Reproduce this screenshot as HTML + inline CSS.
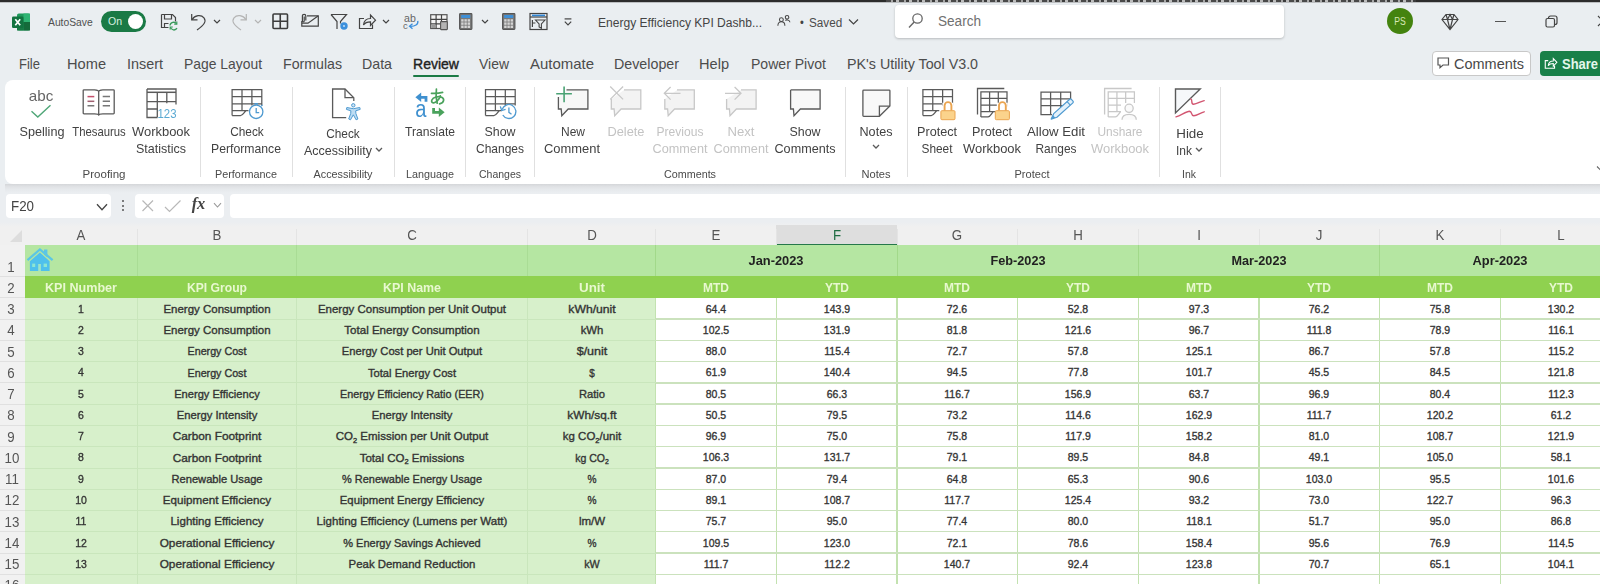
<!DOCTYPE html>
<html><head><meta charset="utf-8"><title>Excel</title>
<style>
html,body{margin:0;padding:0;background:#eaeef1;}
#w{position:absolute;left:0;top:0;width:1600px;height:584px;overflow:hidden;filter:blur(0.5px);}
body{width:1600px;height:584px;overflow:hidden;position:relative;background:#eaeef1;font-family:"Liberation Sans",sans-serif;}
.t{position:absolute;white-space:nowrap;line-height:1;}
.b{position:absolute;box-sizing:border-box;}
svg{overflow:visible;}
sub{font-size:65%;vertical-align:baseline;position:relative;top:0.3em;line-height:0;}
</style></head><body><div id="w">
<div class="b" style="left:0.0px;top:0.0px;width:1600.0px;height:80.0px;background:#eaeef1;"></div>
<div class="b" style="left:0.0px;top:0.0px;width:1600.0px;height:1.8px;background:#2c2c2c;"></div>
<div class="b" style="left:886.0px;top:0.0px;width:530.0px;height:1.8px;background:repeating-linear-gradient(90deg,#4a4a4a 0,#4a4a4a 5px,#a8a8a8 5px,#a8a8a8 7px,#3c3c3c 7px,#3c3c3c 10px,#bdbdbd 10px,#bdbdbd 13px);"></div>
<div class="b" style="left:0.0px;top:1.8px;width:1600.0px;height:1.4px;background:linear-gradient(180deg,#8e8f91,#eaeef1);"></div>
<svg class="b" style="left:12.3px;top:12.5px;" width="18" height="18" viewBox="0 0 18 18"><rect x="5" y="0.500" width="13" height="17" rx="1.800" fill="#1f9a5c"/><rect x="11.500" y="0.500" width="6.500" height="8.500" fill="#2fb473"/><rect x="11.500" y="9" width="6.500" height="8.500" fill="#156a3a"/><rect x="5" y="9" width="6.500" height="8.500" fill="#187a44"/><rect x="0" y="3.500" width="11.500" height="11.500" rx="1.300" fill="#127340"/><path d="M3.300 6.300 L8.200 12.300 M8.200 6.300 L3.300 12.300" stroke="#fff" stroke-width="1.700" fill="none"/></svg>
<span class="t" style="left:48.3px;top:22.2px;font-size:11px;color:#505050;transform-origin:0 50%;transform:translate(0,-50%) scaleX(0.938);">AutoSave</span>
<div class="b" style="left:100.8px;top:11.2px;width:45.5px;height:21.0px;background:#1a7a45;border-radius:11px;"></div>
<span class="t" style="left:108.0px;top:22.3px;font-size:11.5px;color:#d6f0e0;transform-origin:0 50%;transform:translate(0,-50%) scaleX(0.913);">On</span>
<div class="b" style="left:127.8px;top:13.8px;width:15.6px;height:15.6px;background:#fff;border-radius:50%;"></div>
<svg class="b" style="left:160.0px;top:12.0px;" width="18" height="18" viewBox="0 0 18 18"><path d="M1.5 2.5 h11 l3 3 v4 M1.5 2.5 v13 h7" fill="none" stroke="#444" stroke-width="1.2"/><path d="M4.5 2.5 v4.5 h7 v-4.5" fill="none" stroke="#444" stroke-width="1.2"/><path d="M4.5 15.5 v-4 h4" fill="none" stroke="#444" stroke-width="1.2"/><path d="M10 13.5 a3.6 3.6 0 0 1 6.6 -1.6 M17 16.2 a3.6 3.6 0 0 1 -6.6 -1" fill="none" stroke="#3a9b5c" stroke-width="1.3"/><path d="M16.8 9.6 v2.6 h-2.6 M10.2 17.6 v-2.6 h2.6" fill="none" stroke="#3a9b5c" stroke-width="1.2"/></svg>
<svg class="b" style="left:190.0px;top:11.5px;" width="17" height="19" viewBox="0 0 17 19"><path d="M1.700 2 v5.800 h5.800" fill="none" stroke="#444" stroke-width="1.2" stroke-width="1.400"/><path d="M2 7.600 C5 3 11 2.300 14 5.800 C16.500 9.200 14.500 13 7 18" fill="none" stroke="#444" stroke-width="1.2" stroke-width="1.400"/></svg>
<svg class="b" style="left:213.0px;top:19.0px;" width="8" height="6" viewBox="0 0 8 6"><path d="M1 1 L4 4 L7 1" fill="none" stroke="#444" stroke-width="1.2" stroke-width="1.3"/></svg>
<svg class="b" style="left:230.5px;top:11.5px;" width="17" height="19" viewBox="0 0 17 19"><path d="M15.300 2 v5.800 h-5.800" fill="none" stroke="#b4b4b4" stroke-width="1.2" stroke-width="1.300"/><path d="M15 7.600 C12 3 6 2.300 3 5.800 C0.500 9.200 2.500 13 10 18" fill="none" stroke="#b4b4b4" stroke-width="1.2" stroke-width="1.300"/></svg>
<svg class="b" style="left:254.0px;top:19.0px;" width="8" height="6" viewBox="0 0 8 6"><path d="M1 1 L4 4 L7 1" fill="none" stroke="#b4b4b4" stroke-width="1.2"/></svg>
<svg class="b" style="left:271.5px;top:13.0px;" width="16.5" height="16.5" viewBox="0 0 16.5 16.5"><rect x="1" y="1" width="14.500" height="14.500" rx="1" fill="none" stroke="#3c3c3c" stroke-width="1.600"/><path d="M8.250 1 v14.500 M1 8.250 h14.500" fill="none" stroke="#3c3c3c" stroke-width="1.600"/></svg>
<svg class="b" style="left:300.0px;top:12.0px;" width="20" height="16" viewBox="0 0 20 16"><path d="M7 3.800 H18.300 V14.200 H1.800 V9" fill="none" stroke="#444" stroke-width="1.2" stroke-width="1.300"/><path d="M1.800 11.200 H8 L18 4" fill="none" stroke="#444" stroke-width="1.2" stroke-width="1.200"/><path d="M5.800 8.500 V4 a1.700 1.700 0 0 0 -3.400 0 V9 a0.900 0.900 0 0 0 1.800 0 V4.500" fill="none" stroke="#444" stroke-width="1.2" stroke-width="1"/></svg>
<svg class="b" style="left:330.0px;top:13.0px;" width="20" height="18" viewBox="0 0 20 18"><path d="M1 1.5 h15.5 l-6 7 v2 M7 16 v-7.5 l-6 -7" fill="none" stroke="#444" stroke-width="1.2" stroke-width="1.3"/><circle cx="14" cy="13" r="3.700" fill="#3b8fdc"/><circle cx="14" cy="13" r="0.900" fill="#cfe4f7"/></svg>
<svg class="b" style="left:358.0px;top:12.0px;" width="18" height="18" viewBox="0 0 18 18"><path d="M6 6.5 h-4.5 v10 h13 v-4" fill="none" stroke="#444" stroke-width="1.2" stroke-width="1.3"/><path d="M5.5 13 c0.5 -4.5 3 -6.5 7 -6.5 v-3.5 l5 5.2 l-5 5.2 v-3.6 c-3.5 0 -5.5 0.7 -7 3.2 z" fill="none" stroke="#444" stroke-width="1.2"/></svg>
<svg class="b" style="left:382.0px;top:19.0px;" width="8" height="6" viewBox="0 0 8 6"><path d="M1 1 L4 4 L7 1" fill="none" stroke="#444" stroke-width="1.2" stroke-width="1.3"/></svg>
<span class="t" style="left:403.8px;top:17.8px;font-size:11px;color:#666;transform-origin:0 50%;transform:translate(0,-50%) scaleX(0.963);">ab</span>
<svg class="b" style="left:402.0px;top:20.0px;" width="18" height="11" viewBox="0 0 18 11"><text x="3.300" y="8.600" font-size="9.500" fill="#666" text-anchor="middle" font-family="Liberation Sans">c</text><path d="M15.800 0.800 C16.500 4.500 13 6.500 8 6.300" fill="none" stroke="#3b8fdc" stroke-width="1.300"/><path d="M10.500 3.800 L7.500 6.300 L10.500 8.800" fill="none" stroke="#3b8fdc" stroke-width="1.300"/></svg>
<svg class="b" style="left:430.0px;top:13.5px;" width="18" height="16" viewBox="0 0 18 16"><rect x="0.700" y="0.700" width="16.300" height="13.800" fill="#f4f4f4" stroke="#555" stroke-width="1.200"/><path d="M0.700 5.300 h16.300 M0.700 9.900 h10 M6.100 0.700 v13.800 M11.500 0.700 v7" fill="none" stroke="#444" stroke-width="1.2" stroke-width="1"/><rect x="1.300" y="10.500" width="4.300" height="3.500" fill="#9a9a9a"/><rect x="10.600" y="7.600" width="6.700" height="8" rx="0.500" fill="#b4b4b4" stroke="#555" stroke-width="1.100"/></svg>
<svg class="b" style="left:459.3px;top:13.4px;" width="13.5" height="17" viewBox="0 0 13.5 17"><rect x="0.600" y="0.600" width="12.300" height="15.800" rx="0.800" fill="#7a7a7a" stroke="#555" stroke-width="1.100"/><rect x="2.200" y="2" width="9" height="3" fill="#3f8fd6"/><rect x="2.20" y="6.20" width="2.400" height="2.400" fill="#d4d4d4"/><rect x="5.40" y="6.20" width="2.400" height="2.400" fill="#d4d4d4"/><rect x="8.60" y="6.20" width="2.400" height="2.400" fill="#d4d4d4"/><rect x="2.20" y="9.40" width="2.400" height="2.400" fill="#d4d4d4"/><rect x="5.40" y="9.40" width="2.400" height="2.400" fill="#d4d4d4"/><rect x="8.60" y="9.40" width="2.400" height="2.400" fill="#d4d4d4"/><rect x="2.20" y="12.60" width="2.400" height="2.400" fill="#d4d4d4"/><rect x="5.40" y="12.60" width="2.400" height="2.400" fill="#d4d4d4"/><rect x="8.60" y="12.60" width="2.400" height="2.400" fill="#d4d4d4"/></svg>
<svg class="b" style="left:481.0px;top:19.0px;" width="8" height="6" viewBox="0 0 8 6"><path d="M1 1 L4 4 L7 1" fill="none" stroke="#444" stroke-width="1.2" stroke-width="1.3"/></svg>
<svg class="b" style="left:502.0px;top:13.4px;" width="13.5" height="17" viewBox="0 0 13.5 17"><rect x="0.600" y="0.600" width="12.300" height="15.800" rx="0.800" fill="#7a7a7a" stroke="#555" stroke-width="1.100"/><rect x="2.200" y="2" width="9" height="3" fill="#3f8fd6"/><rect x="2.20" y="6.20" width="2.400" height="2.400" fill="#d4d4d4"/><rect x="5.40" y="6.20" width="2.400" height="2.400" fill="#d4d4d4"/><rect x="8.60" y="6.20" width="2.400" height="2.400" fill="#d4d4d4"/><rect x="2.20" y="9.40" width="2.400" height="2.400" fill="#d4d4d4"/><rect x="5.40" y="9.40" width="2.400" height="2.400" fill="#d4d4d4"/><rect x="8.60" y="9.40" width="2.400" height="2.400" fill="#d4d4d4"/><rect x="2.20" y="12.60" width="2.400" height="2.400" fill="#d4d4d4"/><rect x="5.40" y="12.60" width="2.400" height="2.400" fill="#d4d4d4"/><rect x="8.60" y="12.60" width="2.400" height="2.400" fill="#d4d4d4"/></svg>
<svg class="b" style="left:529.0px;top:12.0px;" width="19" height="19" viewBox="0 0 19 19"><rect x="1" y="1.5" width="17" height="16" fill="none" stroke="#444" stroke-width="1.2" stroke-width="1.2"/><path d="M1 5 h17" fill="none" stroke="#444" stroke-width="1.2"/><rect x="3" y="2.6" width="13" height="1.6" fill="#2f86d6"/><path d="M6.5 8 h9.5 l-3.6 4 v4.2 l-2.3 -1.3 v-2.9 z" fill="#eaeef1" stroke="#444" stroke-width="1.1"/><path d="M3.4 8 v7 M3.4 11 h3" fill="none" stroke="#444" stroke-width="1.2" stroke-width="1"/></svg>
<svg class="b" style="left:563.8px;top:18.0px;" width="8" height="8" viewBox="0 0 8 8"><path d="M0.600 0.900 h6.800" fill="none" stroke="#444" stroke-width="1.2" stroke-width="1.300"/><path d="M0.800 3.600 L4 6.800 L7.200 3.600" fill="none" stroke="#444" stroke-width="1.2" stroke-width="1.300"/></svg>
<span class="t" style="left:598.0px;top:22.5px;font-size:12.5px;color:#444;transform-origin:0 50%;transform:translate(0,-50%) scaleX(0.965);">Energy Efficiency KPI Dashb...</span>
<svg class="b" style="left:776.5px;top:14.3px;" width="14" height="13" viewBox="0 0 16 14"><circle cx="5" cy="6" r="2.2" fill="none" stroke="#444" stroke-width="1.2" stroke-width="1.1"/><path d="M1 13 c0 -3.5 2 -4.5 4 -4.5 s4 1 4 4.500" fill="none" stroke="#444" stroke-width="1.2" stroke-width="1.1"/><circle cx="11.5" cy="3.2" r="2" fill="none" stroke="#444" stroke-width="1.2" stroke-width="1.1"/><path d="M9.5 7 c1 -1 4.800 -1.300 5.300 2" fill="none" stroke="#444" stroke-width="1.2" stroke-width="1.100"/></svg>
<span class="t" style="left:800.0px;top:22.6px;font-size:12.5px;color:#444;transform-origin:0 50%;transform:translate(0,-50%) scaleX(0.869);">•</span>
<span class="t" style="left:809.3px;top:22.6px;font-size:12.5px;color:#4a4a4a;transform-origin:0 50%;transform:translate(0,-50%) scaleX(0.936);">Saved</span>
<svg class="b" style="left:848.0px;top:18.0px;" width="11" height="8" viewBox="0 0 11 8"><path d="M1 1.5 L5.5 6 L10 1.500" fill="none" stroke="#444" stroke-width="1.2" stroke-width="1.300"/></svg>
<div class="b" style="left:895.0px;top:5.0px;width:389.0px;height:33.0px;background:#fff;border-radius:4px;box-shadow:0 1px 2.5px rgba(0,0,0,0.22);"></div>
<svg class="b" style="left:908.3px;top:12.3px;" width="16" height="17" viewBox="0 0 16 17"><circle cx="9.5" cy="6.5" r="4.700" fill="none" stroke="#666" stroke-width="1.300"/><path d="M6.200 10 L1 15.500" stroke="#666" stroke-width="1.400" fill="none"/></svg>
<span class="t" style="left:938.0px;top:20.8px;font-size:14px;color:#707070;transform-origin:0 50%;transform:translate(0,-50%) scaleX(0.970);">Search</span>
<div class="b" style="left:1387.0px;top:8.0px;width:26.0px;height:26.0px;background:#44830f;border-radius:50%;"></div>
<span class="t" style="left:1400.0px;top:21.5px;font-size:10px;color:#d8e8b8;transform:translate(-50%,-50%) scaleX(0.862);">PS</span>
<svg class="b" style="left:1441.0px;top:12.5px;" width="18" height="18" viewBox="0 0 18 18"><path d="M5 1.500 h8 l4 5 l-8 10 l-8 -10 z M1 6.500 h16 M5 1.500 l1.500 5 l2.500 10 l2.500 -10 l1.500 -5 M6.500 6.500 l2.500 -5 l2.500 5" fill="none" stroke="#444" stroke-width="1.2" stroke-width="1"/></svg>
<div class="b" style="left:1495.0px;top:20.5px;width:11.0px;height:1.4px;background:#555;"></div>
<svg class="b" style="left:1545.0px;top:15.0px;" width="13" height="13" viewBox="0 0 13 13"><rect x="1" y="3.500" width="8.500" height="8.500" rx="1.500" fill="none" stroke="#444" stroke-width="1.2" stroke-width="1.200"/><path d="M3.500 3.500 v-0.500 a2 2 0 0 1 2 -2 h4.500 a2 2 0 0 1 2 2 v4.500 a2 2 0 0 1 -2 2 h-0.500" fill="none" stroke="#444" stroke-width="1.2" stroke-width="1.200"/></svg>
<svg class="b" style="left:1597.0px;top:15.0px;" width="12" height="12" viewBox="0 0 12 12"><path d="M1 1 L11 11 M11 1 L1 11" fill="none" stroke="#444" stroke-width="1.2" stroke-width="1.200"/></svg>
<span class="t" style="left:19.0px;top:63.2px;font-size:15px;color:#4c4c4c;transform-origin:0 50%;transform:translate(0,-50%) scaleX(0.869);">File</span>
<span class="t" style="left:67.0px;top:63.2px;font-size:15px;color:#4c4c4c;transform-origin:0 50%;transform:translate(0,-50%) scaleX(0.975);">Home</span>
<span class="t" style="left:127.0px;top:63.2px;font-size:15px;color:#4c4c4c;transform-origin:0 50%;transform:translate(0,-50%) scaleX(0.959);">Insert</span>
<span class="t" style="left:184.0px;top:63.2px;font-size:15px;color:#4c4c4c;transform-origin:0 50%;transform:translate(0,-50%) scaleX(0.926);">Page Layout</span>
<span class="t" style="left:283.0px;top:63.2px;font-size:15px;color:#4c4c4c;transform-origin:0 50%;transform:translate(0,-50%) scaleX(0.944);">Formulas</span>
<span class="t" style="left:362.0px;top:63.2px;font-size:15px;color:#4c4c4c;transform-origin:0 50%;transform:translate(0,-50%) scaleX(0.947);">Data</span>
<span class="t" style="left:413.0px;top:63.2px;font-size:15px;color:#222;transform-origin:0 50%;transform:translate(0,-50%) scaleX(0.935);-webkit-text-stroke:0.4px #222;">Review</span>
<div class="b" style="left:413.0px;top:74.5px;width:46.0px;height:2.5px;background:#1b7a46;border-radius:1px;"></div>
<span class="t" style="left:479.0px;top:63.2px;font-size:15px;color:#4c4c4c;transform-origin:0 50%;transform:translate(0,-50%) scaleX(0.931);">View</span>
<span class="t" style="left:530.0px;top:63.2px;font-size:15px;color:#4c4c4c;transform-origin:0 50%;transform:translate(0,-50%) scaleX(0.997);">Automate</span>
<span class="t" style="left:614.0px;top:63.2px;font-size:15px;color:#4c4c4c;transform-origin:0 50%;transform:translate(0,-50%) scaleX(0.951);">Developer</span>
<span class="t" style="left:699.0px;top:63.2px;font-size:15px;color:#4c4c4c;transform-origin:0 50%;transform:translate(0,-50%) scaleX(0.973);">Help</span>
<span class="t" style="left:751.0px;top:63.2px;font-size:15px;color:#4c4c4c;transform-origin:0 50%;transform:translate(0,-50%) scaleX(0.937);">Power Pivot</span>
<span class="t" style="left:847.0px;top:63.2px;font-size:15px;color:#4c4c4c;transform-origin:0 50%;transform:translate(0,-50%) scaleX(0.952);">PK's Utility Tool V3.0</span>
<div class="b" style="left:1432.0px;top:51.0px;width:98.5px;height:24.5px;background:#fff;border:1px solid #c8c8c8;border-radius:4px;"></div>
<svg class="b" style="left:1436.5px;top:57.0px;" width="13" height="12" viewBox="0 0 13 12"><path d="M1 1 h10.500 v7 h-5.500 l-3 2.600 v-2.600 h-2 z" fill="none" stroke="#555" stroke-width="1.200"/></svg>
<span class="t" style="left:1454.0px;top:63.5px;font-size:14.5px;color:#484848;transform-origin:0 50%;transform:translate(0,-50%) scaleX(0.999);">Comments</span>
<div class="b" style="left:1539.5px;top:51.0px;width:70.0px;height:24.5px;background:#198049;border-radius:4px;"></div>
<svg class="b" style="left:1544.0px;top:56.0px;" width="13.5" height="13.5" viewBox="0 0 16 16"><path d="M5 5.500 h-3.500 v9 h11 v-3" fill="none" stroke="#fff" stroke-width="1.300"/><path d="M5 11.500 c0.500 -4 2.500 -5.500 6 -5.500 v-3 l4.300 4.500 l-4.300 4.500 v-3 c-3 0 -4.700 0.500 -6 2.500 z" fill="none" stroke="#fff" stroke-width="1.200"/></svg>
<span class="t" style="left:1562.0px;top:63.5px;font-size:14.5px;color:#e4f8ec;font-weight:bold;transform-origin:0 50%;transform:translate(0,-50%) scaleX(0.893);">Share</span>
<div class="b" style="left:0.0px;top:183.5px;width:1600.0px;height:41.0px;background:#ebeef1;"></div>
<div class="b" style="left:5.0px;top:183.6px;width:1600.0px;height:9.5px;background:linear-gradient(180deg,#d4d6d9 0,#e0e2e5 30%,#e7eaed 65%,#ebeef1 100%);"></div>
<div class="b" style="left:6.0px;top:194.0px;width:105.0px;height:23.5px;background:#ffffff;border-radius:4px;"></div>
<span class="t" style="left:11.0px;top:205.5px;font-size:14px;color:#444;transform-origin:0 50%;transform:translate(0,-50%) scaleX(0.954);">F20</span>
<svg class="b" style="left:95.5px;top:203.0px;" width="12" height="9" viewBox="0 0 12 9"><path d="M1 1.300 L6 6.800 L11 1.300" fill="none" stroke="#444" stroke-width="1.3"/></svg>
<div class="b" style="left:122.0px;top:200.0px;width:2.4px;height:2.4px;background:#555;border-radius:50%;"></div>
<div class="b" style="left:122.0px;top:204.5px;width:2.4px;height:2.4px;background:#555;border-radius:50%;"></div>
<div class="b" style="left:122.0px;top:209.0px;width:2.4px;height:2.4px;background:#555;border-radius:50%;"></div>
<div class="b" style="left:135.0px;top:194.0px;width:89.0px;height:23.5px;background:#ffffff;border-radius:4px;"></div>
<svg class="b" style="left:141.0px;top:199.0px;" width="14" height="14" viewBox="0 0 14 14"><path d="M1.5 1.5 L12 12 M12 1.5 L1.5 12" fill="none" stroke="#b8b8b8" stroke-width="1.2"/></svg>
<svg class="b" style="left:164.0px;top:199.0px;" width="18" height="14" viewBox="0 0 18 14"><path d="M1 8 L5.5 12.5 L16.5 1.5" fill="none" stroke="#b8b8b8" stroke-width="1.2"/></svg>
<span class="t" style="left:198.500px;top:204px;font-family:'Liberation Serif',serif;font-style:italic;font-weight:bold;font-size:16.500px;color:#444;transform:translate(-50%,-50%);">fx</span>
<svg class="b" style="left:213.0px;top:202.0px;" width="9" height="7" viewBox="0 0 9 7"><path d="M1 1.2 L4.5 5 L8 1.2" fill="none" stroke="#999" stroke-width="1.1"/></svg>
<div class="b" style="left:230.0px;top:194.0px;width:1380.0px;height:23.5px;background:#ffffff;border-radius:4px;"></div>
<div class="b" style="left:0.0px;top:221.5px;width:1600.0px;height:23.1px;background:linear-gradient(180deg,#ebeef1 0,#f0f0f0 5px);"></div>
<div class="b" style="left:776.2px;top:225.0px;width:120.8px;height:19.6px;background:#dedede;border-bottom:1.500px solid #26784a;"></div>
<span class="t" style="left:81.0px;top:235.2px;font-size:14px;color:#555;transform:translate(-50%,-50%) scaleX(0.950);">A</span>
<div class="b" style="left:136.5px;top:228.5px;width:1.0px;height:16.1px;background:#e4e4e4;"></div>
<span class="t" style="left:216.5px;top:235.2px;font-size:14px;color:#555;transform:translate(-50%,-50%) scaleX(0.950);">B</span>
<div class="b" style="left:295.5px;top:228.5px;width:1.0px;height:16.1px;background:#e4e4e4;"></div>
<span class="t" style="left:411.8px;top:235.2px;font-size:14px;color:#555;transform:translate(-50%,-50%) scaleX(0.950);">C</span>
<div class="b" style="left:527.0px;top:228.5px;width:1.0px;height:16.1px;background:#e4e4e4;"></div>
<span class="t" style="left:591.5px;top:235.2px;font-size:14px;color:#555;transform:translate(-50%,-50%) scaleX(0.950);">D</span>
<div class="b" style="left:655.0px;top:228.5px;width:1.0px;height:16.1px;background:#e4e4e4;"></div>
<span class="t" style="left:715.9px;top:235.2px;font-size:14px;color:#555;transform:translate(-50%,-50%) scaleX(0.950);">E</span>
<div class="b" style="left:775.7px;top:228.5px;width:1.0px;height:16.1px;background:#e4e4e4;"></div>
<span class="t" style="left:836.6px;top:235.2px;font-size:14px;color:#1e6b41;transform:translate(-50%,-50%) scaleX(0.950);">F</span>
<div class="b" style="left:896.5px;top:228.5px;width:1.0px;height:16.1px;background:#e4e4e4;"></div>
<span class="t" style="left:957.3px;top:235.2px;font-size:14px;color:#555;transform:translate(-50%,-50%) scaleX(0.950);">G</span>
<div class="b" style="left:1017.1px;top:228.5px;width:1.0px;height:16.1px;background:#e4e4e4;"></div>
<span class="t" style="left:1078.0px;top:235.2px;font-size:14px;color:#555;transform:translate(-50%,-50%) scaleX(0.950);">H</span>
<div class="b" style="left:1137.8px;top:228.5px;width:1.0px;height:16.1px;background:#e4e4e4;"></div>
<span class="t" style="left:1198.7px;top:235.2px;font-size:14px;color:#555;transform:translate(-50%,-50%) scaleX(0.950);">I</span>
<div class="b" style="left:1258.5px;top:228.5px;width:1.0px;height:16.1px;background:#e4e4e4;"></div>
<span class="t" style="left:1319.3px;top:235.2px;font-size:14px;color:#555;transform:translate(-50%,-50%) scaleX(0.950);">J</span>
<div class="b" style="left:1379.2px;top:228.5px;width:1.0px;height:16.1px;background:#e4e4e4;"></div>
<span class="t" style="left:1440.1px;top:235.2px;font-size:14px;color:#555;transform:translate(-50%,-50%) scaleX(0.950);">K</span>
<div class="b" style="left:1499.9px;top:228.5px;width:1.0px;height:16.1px;background:#e4e4e4;"></div>
<span class="t" style="left:1560.7px;top:235.2px;font-size:14px;color:#555;transform:translate(-50%,-50%) scaleX(0.950);">L</span>
<div class="b" style="left:1620.5px;top:228.5px;width:1.0px;height:16.1px;background:#e4e4e4;"></div>
<svg class="b" style="left:8.0px;top:228.0px;" width="16" height="15" viewBox="0 0 16 15"><path d="M14 2 L14 14 L2 14 Z" fill="#dddddd"/></svg>
<div class="b" style="left:0.0px;top:244.6px;width:25.0px;height:339.4px;background:#f1f1f1;"></div>
<span class="t" style="left:11.0px;top:266.5px;font-size:14px;color:#555;transform:translate(-50%,-50%) scaleX(0.950);">1</span>
<div class="b" style="left:0.0px;top:275.6px;width:25.0px;height:1.0px;background:#e0e0e0;"></div>
<span class="t" style="left:11.0px;top:287.5px;font-size:14px;color:#555;transform:translate(-50%,-50%) scaleX(0.950);">2</span>
<div class="b" style="left:0.0px;top:297.3px;width:25.0px;height:1.0px;background:#e0e0e0;"></div>
<span class="t" style="left:11.0px;top:308.9px;font-size:14px;color:#555;transform:translate(-50%,-50%) scaleX(0.950);">3</span>
<div class="b" style="left:0.0px;top:318.6px;width:25.0px;height:1.0px;background:#e0e0e0;"></div>
<span class="t" style="left:11.0px;top:330.2px;font-size:14px;color:#555;transform:translate(-50%,-50%) scaleX(0.950);">4</span>
<div class="b" style="left:0.0px;top:339.8px;width:25.0px;height:1.0px;background:#e0e0e0;"></div>
<span class="t" style="left:11.0px;top:351.5px;font-size:14px;color:#555;transform:translate(-50%,-50%) scaleX(0.950);">5</span>
<div class="b" style="left:0.0px;top:361.1px;width:25.0px;height:1.0px;background:#e0e0e0;"></div>
<span class="t" style="left:11.0px;top:372.7px;font-size:14px;color:#555;transform:translate(-50%,-50%) scaleX(0.950);">6</span>
<div class="b" style="left:0.0px;top:382.4px;width:25.0px;height:1.0px;background:#e0e0e0;"></div>
<span class="t" style="left:11.0px;top:394.0px;font-size:14px;color:#555;transform:translate(-50%,-50%) scaleX(0.950);">7</span>
<div class="b" style="left:0.0px;top:403.6px;width:25.0px;height:1.0px;background:#e0e0e0;"></div>
<span class="t" style="left:11.0px;top:415.3px;font-size:14px;color:#555;transform:translate(-50%,-50%) scaleX(0.950);">8</span>
<div class="b" style="left:0.0px;top:424.9px;width:25.0px;height:1.0px;background:#e0e0e0;"></div>
<span class="t" style="left:11.0px;top:436.6px;font-size:14px;color:#555;transform:translate(-50%,-50%) scaleX(0.950);">9</span>
<div class="b" style="left:0.0px;top:446.2px;width:25.0px;height:1.0px;background:#e0e0e0;"></div>
<span class="t" style="left:12.0px;top:457.8px;font-size:14px;color:#555;transform:translate(-50%,-50%) scaleX(0.950);">10</span>
<div class="b" style="left:0.0px;top:467.5px;width:25.0px;height:1.0px;background:#e0e0e0;"></div>
<span class="t" style="left:12.0px;top:479.1px;font-size:14px;color:#555;transform:translate(-50%,-50%) scaleX(0.950);">11</span>
<div class="b" style="left:0.0px;top:488.7px;width:25.0px;height:1.0px;background:#e0e0e0;"></div>
<span class="t" style="left:12.0px;top:500.4px;font-size:14px;color:#555;transform:translate(-50%,-50%) scaleX(0.950);">12</span>
<div class="b" style="left:0.0px;top:510.0px;width:25.0px;height:1.0px;background:#e0e0e0;"></div>
<span class="t" style="left:12.0px;top:521.6px;font-size:14px;color:#555;transform:translate(-50%,-50%) scaleX(0.950);">13</span>
<div class="b" style="left:0.0px;top:531.3px;width:25.0px;height:1.0px;background:#e0e0e0;"></div>
<span class="t" style="left:12.0px;top:542.9px;font-size:14px;color:#555;transform:translate(-50%,-50%) scaleX(0.950);">14</span>
<div class="b" style="left:0.0px;top:552.5px;width:25.0px;height:1.0px;background:#e0e0e0;"></div>
<span class="t" style="left:12.0px;top:564.2px;font-size:14px;color:#555;transform:translate(-50%,-50%) scaleX(0.950);">15</span>
<div class="b" style="left:0.0px;top:573.8px;width:25.0px;height:1.0px;background:#e0e0e0;"></div>
<span class="t" style="left:12.0px;top:585.4px;font-size:14px;color:#555;transform:translate(-50%,-50%) scaleX(0.950);">16</span>
<div class="b" style="left:0.0px;top:595.1px;width:25.0px;height:1.0px;background:#e0e0e0;"></div>
<div class="b" style="left:25.0px;top:244.6px;width:1575.0px;height:31.5px;background:#b5e6a2;"></div>
<div class="b" style="left:136.5px;top:244.6px;width:1.0px;height:31.5px;background:#a9dc95;"></div>
<div class="b" style="left:295.5px;top:244.6px;width:1.0px;height:31.5px;background:#a9dc95;"></div>
<div class="b" style="left:527.0px;top:244.6px;width:1.0px;height:31.5px;background:#a9dc95;"></div>
<div class="b" style="left:655.0px;top:244.6px;width:1.2px;height:31.5px;background:#a2d98a;"></div>
<div class="b" style="left:896.5px;top:244.6px;width:1.2px;height:31.5px;background:#a2d98a;"></div>
<div class="b" style="left:1137.8px;top:244.6px;width:1.2px;height:31.5px;background:#a2d98a;"></div>
<div class="b" style="left:1379.2px;top:244.6px;width:1.2px;height:31.5px;background:#a2d98a;"></div>
<div class="b" style="left:25.0px;top:276.1px;width:1575.0px;height:21.7px;background:#8fd14f;"></div>
<div class="b" style="left:25.0px;top:297.8px;width:630.5px;height:286.2px;background:#d7f0cb;"></div>
<div class="b" style="left:655.5px;top:297.8px;width:944.5px;height:286.2px;background:#ffffff;"></div>
<div class="b" style="left:654.8px;top:297.8px;width:1.4px;height:286.2px;background:#c3e2b0;"></div>
<div class="b" style="left:775.5px;top:297.8px;width:1.4px;height:286.2px;background:#c3e2b0;"></div>
<div class="b" style="left:896.3px;top:297.8px;width:1.4px;height:286.2px;background:#c3e2b0;"></div>
<div class="b" style="left:1016.9px;top:297.8px;width:1.4px;height:286.2px;background:#c3e2b0;"></div>
<div class="b" style="left:1137.6px;top:297.8px;width:1.4px;height:286.2px;background:#c3e2b0;"></div>
<div class="b" style="left:1258.3px;top:297.8px;width:1.4px;height:286.2px;background:#c3e2b0;"></div>
<div class="b" style="left:1379.0px;top:297.8px;width:1.4px;height:286.2px;background:#c3e2b0;"></div>
<div class="b" style="left:1499.7px;top:297.8px;width:1.4px;height:286.2px;background:#c3e2b0;"></div>
<div class="b" style="left:655.5px;top:318.4px;width:944.5px;height:1.4px;background:#cbe2bd;"></div>
<div class="b" style="left:655.5px;top:339.6px;width:944.5px;height:1.4px;background:#cbe2bd;"></div>
<div class="b" style="left:655.5px;top:360.9px;width:944.5px;height:1.4px;background:#cbe2bd;"></div>
<div class="b" style="left:655.5px;top:382.2px;width:944.5px;height:1.4px;background:#cbe2bd;"></div>
<div class="b" style="left:655.5px;top:403.4px;width:944.5px;height:1.4px;background:#cbe2bd;"></div>
<div class="b" style="left:655.5px;top:424.7px;width:944.5px;height:1.4px;background:#cbe2bd;"></div>
<div class="b" style="left:655.5px;top:446.0px;width:944.5px;height:1.4px;background:#cbe2bd;"></div>
<div class="b" style="left:655.5px;top:467.3px;width:944.5px;height:1.4px;background:#cbe2bd;"></div>
<div class="b" style="left:655.5px;top:488.5px;width:944.5px;height:1.4px;background:#cbe2bd;"></div>
<div class="b" style="left:655.5px;top:509.8px;width:944.5px;height:1.4px;background:#cbe2bd;"></div>
<div class="b" style="left:655.5px;top:531.1px;width:944.5px;height:1.4px;background:#cbe2bd;"></div>
<div class="b" style="left:655.5px;top:552.3px;width:944.5px;height:1.4px;background:#cbe2bd;"></div>
<div class="b" style="left:655.5px;top:573.6px;width:944.5px;height:1.4px;background:#cbe2bd;"></div>
<div class="b" style="left:655.5px;top:594.9px;width:944.5px;height:1.4px;background:#cbe2bd;"></div>
<div class="b" style="left:136.5px;top:297.8px;width:1.0px;height:286.2px;background:#c9e6bc;"></div>
<div class="b" style="left:295.5px;top:297.8px;width:1.0px;height:286.2px;background:#c9e6bc;"></div>
<div class="b" style="left:527.0px;top:297.8px;width:1.0px;height:286.2px;background:#c9e6bc;"></div>
<div class="b" style="left:25.0px;top:318.6px;width:630.5px;height:1.0px;background:#c9e6bc;"></div>
<div class="b" style="left:25.0px;top:339.8px;width:630.5px;height:1.0px;background:#c9e6bc;"></div>
<div class="b" style="left:25.0px;top:361.1px;width:630.5px;height:1.0px;background:#c9e6bc;"></div>
<div class="b" style="left:25.0px;top:382.4px;width:630.5px;height:1.0px;background:#c9e6bc;"></div>
<div class="b" style="left:25.0px;top:403.6px;width:630.5px;height:1.0px;background:#c9e6bc;"></div>
<div class="b" style="left:25.0px;top:424.9px;width:630.5px;height:1.0px;background:#c9e6bc;"></div>
<div class="b" style="left:25.0px;top:446.2px;width:630.5px;height:1.0px;background:#c9e6bc;"></div>
<div class="b" style="left:25.0px;top:467.5px;width:630.5px;height:1.0px;background:#c9e6bc;"></div>
<div class="b" style="left:25.0px;top:488.7px;width:630.5px;height:1.0px;background:#c9e6bc;"></div>
<div class="b" style="left:25.0px;top:510.0px;width:630.5px;height:1.0px;background:#c9e6bc;"></div>
<div class="b" style="left:25.0px;top:531.3px;width:630.5px;height:1.0px;background:#c9e6bc;"></div>
<div class="b" style="left:25.0px;top:552.5px;width:630.5px;height:1.0px;background:#c9e6bc;"></div>
<div class="b" style="left:25.0px;top:573.8px;width:630.5px;height:1.0px;background:#c9e6bc;"></div>
<div class="b" style="left:25.0px;top:595.1px;width:630.5px;height:1.0px;background:#c9e6bc;"></div>
<span class="t" style="left:776.2px;top:259.6px;font-size:13px;color:#222;font-weight:bold;transform:translate(-50%,-50%) scaleX(0.988);">Jan-2023</span>
<span class="t" style="left:1017.6px;top:259.6px;font-size:13px;color:#222;font-weight:bold;transform:translate(-50%,-50%) scaleX(0.976);">Feb-2023</span>
<span class="t" style="left:1259.0px;top:259.6px;font-size:13px;color:#222;font-weight:bold;transform:translate(-50%,-50%) scaleX(0.975);">Mar-2023</span>
<span class="t" style="left:1500.4px;top:259.6px;font-size:13px;color:#222;font-weight:bold;transform:translate(-50%,-50%) scaleX(0.988);">Apr-2023</span>
<span class="t" style="left:81.0px;top:287.5px;font-size:12.5px;color:#e8f8d0;font-weight:bold;transform:translate(-50%,-50%) scaleX(1.006);">KPI Number</span>
<span class="t" style="left:216.5px;top:287.5px;font-size:12.5px;color:#e8f8d0;font-weight:bold;transform:translate(-50%,-50%) scaleX(0.971);">KPI Group</span>
<span class="t" style="left:411.8px;top:287.5px;font-size:12.5px;color:#e8f8d0;font-weight:bold;transform:translate(-50%,-50%) scaleX(0.994);">KPI Name</span>
<span class="t" style="left:591.5px;top:287.5px;font-size:12.5px;color:#e8f8d0;font-weight:bold;transform:translate(-50%,-50%) scaleX(1.070);">Unit</span>
<span class="t" style="left:715.9px;top:287.5px;font-size:12.5px;color:#e8f8d0;font-weight:bold;transform:translate(-50%,-50%) scaleX(0.960);">MTD</span>
<span class="t" style="left:836.6px;top:287.5px;font-size:12.5px;color:#e8f8d0;font-weight:bold;transform:translate(-50%,-50%) scaleX(0.959);">YTD</span>
<span class="t" style="left:957.3px;top:287.5px;font-size:12.5px;color:#e8f8d0;font-weight:bold;transform:translate(-50%,-50%) scaleX(0.960);">MTD</span>
<span class="t" style="left:1078.0px;top:287.5px;font-size:12.5px;color:#e8f8d0;font-weight:bold;transform:translate(-50%,-50%) scaleX(0.959);">YTD</span>
<span class="t" style="left:1198.7px;top:287.5px;font-size:12.5px;color:#e8f8d0;font-weight:bold;transform:translate(-50%,-50%) scaleX(0.960);">MTD</span>
<span class="t" style="left:1319.3px;top:287.5px;font-size:12.5px;color:#e8f8d0;font-weight:bold;transform:translate(-50%,-50%) scaleX(0.959);">YTD</span>
<span class="t" style="left:1440.1px;top:287.5px;font-size:12.5px;color:#e8f8d0;font-weight:bold;transform:translate(-50%,-50%) scaleX(0.960);">MTD</span>
<span class="t" style="left:1560.7px;top:287.5px;font-size:12.5px;color:#e8f8d0;font-weight:bold;transform:translate(-50%,-50%) scaleX(0.959);">YTD</span>
<svg class="b" style="left:26.0px;top:247.0px;" width="28" height="26" viewBox="0 0 28 26"><path d="M18 2.5 h3.4 v8 l-3.4 -3 z" fill="#5cc6e4"/><path d="M1.5 13.2 L13.9 2.4 L26.6 13.2" fill="none" stroke="#5cc6e4" stroke-width="2.2" stroke-linejoin="miter"/><path d="M3.9 14.2 L13.9 5.6 L23.6 14.2 V24 H3.9 Z" fill="#4fc0ec"/><rect x="6.2" y="16.600" width="3" height="3.400" fill="#8de6d2"/><rect x="17.600" y="16.600" width="3.400" height="3.400" fill="#8de6d2"/><rect x="12.200" y="17" width="2.700" height="7.200" fill="#9ee4c8"/></svg>
<span class="t" style="left:81.0px;top:309.5px;font-size:11.8px;color:#343434;transform:translate(-50%,-50%) scaleX(0.890);-webkit-text-stroke:0.35px #343434;">1</span>
<span class="t" style="left:216.5px;top:308.7px;font-size:11px;color:#343434;transform:translate(-50%,-50%) scaleX(1.043);-webkit-text-stroke:0.35px #343434;">Energy Consumption</span>
<span class="t" style="left:411.8px;top:308.7px;font-size:11px;color:#343434;transform:translate(-50%,-50%) scaleX(1.043);-webkit-text-stroke:0.35px #343434;">Energy Consumption per Unit Output</span>
<span class="t" style="left:591.5px;top:308.7px;font-size:11px;color:#343434;transform:translate(-50%,-50%) scaleX(1.105);-webkit-text-stroke:0.35px #343434;">kWh/unit</span>
<span class="t" style="left:715.9px;top:309.5px;font-size:11.8px;color:#343434;transform:translate(-50%,-50%) scaleX(0.890);-webkit-text-stroke:0.35px #343434;">64.4</span>
<span class="t" style="left:836.6px;top:309.5px;font-size:11.8px;color:#343434;transform:translate(-50%,-50%) scaleX(0.890);-webkit-text-stroke:0.35px #343434;">143.9</span>
<span class="t" style="left:957.3px;top:309.5px;font-size:11.8px;color:#343434;transform:translate(-50%,-50%) scaleX(0.890);-webkit-text-stroke:0.35px #343434;">72.6</span>
<span class="t" style="left:1078.0px;top:309.5px;font-size:11.8px;color:#343434;transform:translate(-50%,-50%) scaleX(0.890);-webkit-text-stroke:0.35px #343434;">52.8</span>
<span class="t" style="left:1198.7px;top:309.5px;font-size:11.8px;color:#343434;transform:translate(-50%,-50%) scaleX(0.890);-webkit-text-stroke:0.35px #343434;">97.3</span>
<span class="t" style="left:1319.3px;top:309.5px;font-size:11.8px;color:#343434;transform:translate(-50%,-50%) scaleX(0.890);-webkit-text-stroke:0.35px #343434;">76.2</span>
<span class="t" style="left:1440.1px;top:309.5px;font-size:11.8px;color:#343434;transform:translate(-50%,-50%) scaleX(0.890);-webkit-text-stroke:0.35px #343434;">75.8</span>
<span class="t" style="left:1560.7px;top:309.5px;font-size:11.8px;color:#343434;transform:translate(-50%,-50%) scaleX(0.890);-webkit-text-stroke:0.35px #343434;">130.2</span>
<span class="t" style="left:81.0px;top:330.8px;font-size:11.8px;color:#343434;transform:translate(-50%,-50%) scaleX(0.890);-webkit-text-stroke:0.35px #343434;">2</span>
<span class="t" style="left:216.5px;top:330.0px;font-size:11px;color:#343434;transform:translate(-50%,-50%) scaleX(1.043);-webkit-text-stroke:0.35px #343434;">Energy Consumption</span>
<span class="t" style="left:411.8px;top:330.0px;font-size:11px;color:#343434;transform:translate(-50%,-50%) scaleX(1.049);-webkit-text-stroke:0.35px #343434;">Total Energy Consumption</span>
<span class="t" style="left:591.5px;top:330.0px;font-size:11px;color:#343434;transform:translate(-50%,-50%) scaleX(1.032);-webkit-text-stroke:0.35px #343434;">kWh</span>
<span class="t" style="left:715.9px;top:330.8px;font-size:11.8px;color:#343434;transform:translate(-50%,-50%) scaleX(0.890);-webkit-text-stroke:0.35px #343434;">102.5</span>
<span class="t" style="left:836.6px;top:330.8px;font-size:11.8px;color:#343434;transform:translate(-50%,-50%) scaleX(0.890);-webkit-text-stroke:0.35px #343434;">131.9</span>
<span class="t" style="left:957.3px;top:330.8px;font-size:11.8px;color:#343434;transform:translate(-50%,-50%) scaleX(0.890);-webkit-text-stroke:0.35px #343434;">81.8</span>
<span class="t" style="left:1078.0px;top:330.8px;font-size:11.8px;color:#343434;transform:translate(-50%,-50%) scaleX(0.890);-webkit-text-stroke:0.35px #343434;">121.6</span>
<span class="t" style="left:1198.7px;top:330.8px;font-size:11.8px;color:#343434;transform:translate(-50%,-50%) scaleX(0.890);-webkit-text-stroke:0.35px #343434;">96.7</span>
<span class="t" style="left:1319.3px;top:330.8px;font-size:11.8px;color:#343434;transform:translate(-50%,-50%) scaleX(0.890);-webkit-text-stroke:0.35px #343434;">111.8</span>
<span class="t" style="left:1440.1px;top:330.8px;font-size:11.8px;color:#343434;transform:translate(-50%,-50%) scaleX(0.890);-webkit-text-stroke:0.35px #343434;">78.9</span>
<span class="t" style="left:1560.7px;top:330.8px;font-size:11.8px;color:#343434;transform:translate(-50%,-50%) scaleX(0.890);-webkit-text-stroke:0.35px #343434;">116.1</span>
<span class="t" style="left:81.0px;top:352.0px;font-size:11.8px;color:#343434;transform:translate(-50%,-50%) scaleX(0.890);-webkit-text-stroke:0.35px #343434;">3</span>
<span class="t" style="left:216.5px;top:351.3px;font-size:11px;color:#343434;transform:translate(-50%,-50%) scaleX(0.973);-webkit-text-stroke:0.35px #343434;">Energy Cost</span>
<span class="t" style="left:411.8px;top:351.3px;font-size:11px;color:#343434;transform:translate(-50%,-50%) scaleX(1.016);-webkit-text-stroke:0.35px #343434;">Energy Cost per Unit Output</span>
<span class="t" style="left:591.5px;top:351.3px;font-size:11px;color:#343434;transform:translate(-50%,-50%) scaleX(1.140);-webkit-text-stroke:0.35px #343434;">$/unit</span>
<span class="t" style="left:715.9px;top:352.0px;font-size:11.8px;color:#343434;transform:translate(-50%,-50%) scaleX(0.890);-webkit-text-stroke:0.35px #343434;">88.0</span>
<span class="t" style="left:836.6px;top:352.0px;font-size:11.8px;color:#343434;transform:translate(-50%,-50%) scaleX(0.890);-webkit-text-stroke:0.35px #343434;">115.4</span>
<span class="t" style="left:957.3px;top:352.0px;font-size:11.8px;color:#343434;transform:translate(-50%,-50%) scaleX(0.890);-webkit-text-stroke:0.35px #343434;">72.7</span>
<span class="t" style="left:1078.0px;top:352.0px;font-size:11.8px;color:#343434;transform:translate(-50%,-50%) scaleX(0.890);-webkit-text-stroke:0.35px #343434;">57.8</span>
<span class="t" style="left:1198.7px;top:352.0px;font-size:11.8px;color:#343434;transform:translate(-50%,-50%) scaleX(0.890);-webkit-text-stroke:0.35px #343434;">125.1</span>
<span class="t" style="left:1319.3px;top:352.0px;font-size:11.8px;color:#343434;transform:translate(-50%,-50%) scaleX(0.890);-webkit-text-stroke:0.35px #343434;">86.7</span>
<span class="t" style="left:1440.1px;top:352.0px;font-size:11.8px;color:#343434;transform:translate(-50%,-50%) scaleX(0.890);-webkit-text-stroke:0.35px #343434;">57.8</span>
<span class="t" style="left:1560.7px;top:352.0px;font-size:11.8px;color:#343434;transform:translate(-50%,-50%) scaleX(0.890);-webkit-text-stroke:0.35px #343434;">115.2</span>
<span class="t" style="left:81.0px;top:373.3px;font-size:11.8px;color:#343434;transform:translate(-50%,-50%) scaleX(0.890);-webkit-text-stroke:0.35px #343434;">4</span>
<span class="t" style="left:216.5px;top:372.5px;font-size:11px;color:#343434;transform:translate(-50%,-50%) scaleX(0.973);-webkit-text-stroke:0.35px #343434;">Energy Cost</span>
<span class="t" style="left:411.8px;top:372.5px;font-size:11px;color:#343434;transform:translate(-50%,-50%) scaleX(1.014);-webkit-text-stroke:0.35px #343434;">Total Energy Cost</span>
<span class="t" style="left:591.5px;top:372.5px;font-size:11px;color:#343434;transform:translate(-50%,-50%) scaleX(0.898);-webkit-text-stroke:0.35px #343434;">$</span>
<span class="t" style="left:715.9px;top:373.3px;font-size:11.8px;color:#343434;transform:translate(-50%,-50%) scaleX(0.890);-webkit-text-stroke:0.35px #343434;">61.9</span>
<span class="t" style="left:836.6px;top:373.3px;font-size:11.8px;color:#343434;transform:translate(-50%,-50%) scaleX(0.890);-webkit-text-stroke:0.35px #343434;">140.4</span>
<span class="t" style="left:957.3px;top:373.3px;font-size:11.8px;color:#343434;transform:translate(-50%,-50%) scaleX(0.890);-webkit-text-stroke:0.35px #343434;">94.5</span>
<span class="t" style="left:1078.0px;top:373.3px;font-size:11.8px;color:#343434;transform:translate(-50%,-50%) scaleX(0.890);-webkit-text-stroke:0.35px #343434;">77.8</span>
<span class="t" style="left:1198.7px;top:373.3px;font-size:11.8px;color:#343434;transform:translate(-50%,-50%) scaleX(0.890);-webkit-text-stroke:0.35px #343434;">101.7</span>
<span class="t" style="left:1319.3px;top:373.3px;font-size:11.8px;color:#343434;transform:translate(-50%,-50%) scaleX(0.890);-webkit-text-stroke:0.35px #343434;">45.5</span>
<span class="t" style="left:1440.1px;top:373.3px;font-size:11.8px;color:#343434;transform:translate(-50%,-50%) scaleX(0.890);-webkit-text-stroke:0.35px #343434;">84.5</span>
<span class="t" style="left:1560.7px;top:373.3px;font-size:11.8px;color:#343434;transform:translate(-50%,-50%) scaleX(0.890);-webkit-text-stroke:0.35px #343434;">121.8</span>
<span class="t" style="left:81.0px;top:394.6px;font-size:11.8px;color:#343434;transform:translate(-50%,-50%) scaleX(0.890);-webkit-text-stroke:0.35px #343434;">5</span>
<span class="t" style="left:216.5px;top:393.8px;font-size:11px;color:#343434;transform:translate(-50%,-50%) scaleX(1.009);-webkit-text-stroke:0.35px #343434;">Energy Efficiency</span>
<span class="t" style="left:411.8px;top:393.8px;font-size:11px;color:#343434;transform:translate(-50%,-50%) scaleX(0.982);-webkit-text-stroke:0.35px #343434;">Energy Efficiency Ratio (EER)</span>
<span class="t" style="left:591.5px;top:393.8px;font-size:11px;color:#343434;transform:translate(-50%,-50%) scaleX(1.020);-webkit-text-stroke:0.35px #343434;">Ratio</span>
<span class="t" style="left:715.9px;top:394.6px;font-size:11.8px;color:#343434;transform:translate(-50%,-50%) scaleX(0.890);-webkit-text-stroke:0.35px #343434;">80.5</span>
<span class="t" style="left:836.6px;top:394.6px;font-size:11.8px;color:#343434;transform:translate(-50%,-50%) scaleX(0.890);-webkit-text-stroke:0.35px #343434;">66.3</span>
<span class="t" style="left:957.3px;top:394.6px;font-size:11.8px;color:#343434;transform:translate(-50%,-50%) scaleX(0.890);-webkit-text-stroke:0.35px #343434;">116.7</span>
<span class="t" style="left:1078.0px;top:394.6px;font-size:11.8px;color:#343434;transform:translate(-50%,-50%) scaleX(0.890);-webkit-text-stroke:0.35px #343434;">156.9</span>
<span class="t" style="left:1198.7px;top:394.6px;font-size:11.8px;color:#343434;transform:translate(-50%,-50%) scaleX(0.890);-webkit-text-stroke:0.35px #343434;">63.7</span>
<span class="t" style="left:1319.3px;top:394.6px;font-size:11.8px;color:#343434;transform:translate(-50%,-50%) scaleX(0.890);-webkit-text-stroke:0.35px #343434;">96.9</span>
<span class="t" style="left:1440.1px;top:394.6px;font-size:11.8px;color:#343434;transform:translate(-50%,-50%) scaleX(0.890);-webkit-text-stroke:0.35px #343434;">80.4</span>
<span class="t" style="left:1560.7px;top:394.6px;font-size:11.8px;color:#343434;transform:translate(-50%,-50%) scaleX(0.890);-webkit-text-stroke:0.35px #343434;">112.3</span>
<span class="t" style="left:81.0px;top:415.8px;font-size:11.8px;color:#343434;transform:translate(-50%,-50%) scaleX(0.890);-webkit-text-stroke:0.35px #343434;">6</span>
<span class="t" style="left:216.5px;top:415.1px;font-size:11px;color:#343434;transform:translate(-50%,-50%) scaleX(1.021);-webkit-text-stroke:0.35px #343434;">Energy Intensity</span>
<span class="t" style="left:411.8px;top:415.1px;font-size:11px;color:#343434;transform:translate(-50%,-50%) scaleX(1.021);-webkit-text-stroke:0.35px #343434;">Energy Intensity</span>
<span class="t" style="left:591.5px;top:415.1px;font-size:11px;color:#343434;transform:translate(-50%,-50%) scaleX(1.075);-webkit-text-stroke:0.35px #343434;">kWh/sq.ft</span>
<span class="t" style="left:715.9px;top:415.8px;font-size:11.8px;color:#343434;transform:translate(-50%,-50%) scaleX(0.890);-webkit-text-stroke:0.35px #343434;">50.5</span>
<span class="t" style="left:836.6px;top:415.8px;font-size:11.8px;color:#343434;transform:translate(-50%,-50%) scaleX(0.890);-webkit-text-stroke:0.35px #343434;">79.5</span>
<span class="t" style="left:957.3px;top:415.8px;font-size:11.8px;color:#343434;transform:translate(-50%,-50%) scaleX(0.890);-webkit-text-stroke:0.35px #343434;">73.2</span>
<span class="t" style="left:1078.0px;top:415.8px;font-size:11.8px;color:#343434;transform:translate(-50%,-50%) scaleX(0.890);-webkit-text-stroke:0.35px #343434;">114.6</span>
<span class="t" style="left:1198.7px;top:415.8px;font-size:11.8px;color:#343434;transform:translate(-50%,-50%) scaleX(0.890);-webkit-text-stroke:0.35px #343434;">162.9</span>
<span class="t" style="left:1319.3px;top:415.8px;font-size:11.8px;color:#343434;transform:translate(-50%,-50%) scaleX(0.890);-webkit-text-stroke:0.35px #343434;">111.7</span>
<span class="t" style="left:1440.1px;top:415.8px;font-size:11.8px;color:#343434;transform:translate(-50%,-50%) scaleX(0.890);-webkit-text-stroke:0.35px #343434;">120.2</span>
<span class="t" style="left:1560.7px;top:415.8px;font-size:11.8px;color:#343434;transform:translate(-50%,-50%) scaleX(0.890);-webkit-text-stroke:0.35px #343434;">61.2</span>
<span class="t" style="left:81.0px;top:437.1px;font-size:11.8px;color:#343434;transform:translate(-50%,-50%) scaleX(0.890);-webkit-text-stroke:0.35px #343434;">7</span>
<span class="t" style="left:216.5px;top:436.4px;font-size:11px;color:#343434;transform:translate(-50%,-50%) scaleX(1.073);-webkit-text-stroke:0.35px #343434;">Carbon Footprint</span>
<span class="t" style="left:411.8px;top:436.4px;font-size:11px;color:#343434;transform:translate(-50%,-50%) scaleX(1.046);-webkit-text-stroke:0.35px #343434;">CO<sub>2</sub> Emission per Unit Output</span>
<span class="t" style="left:591.5px;top:436.4px;font-size:11px;color:#343434;transform:translate(-50%,-50%) scaleX(1.043);-webkit-text-stroke:0.35px #343434;">kg CO<sub>2</sub>/unit</span>
<span class="t" style="left:715.9px;top:437.1px;font-size:11.8px;color:#343434;transform:translate(-50%,-50%) scaleX(0.890);-webkit-text-stroke:0.35px #343434;">96.9</span>
<span class="t" style="left:836.6px;top:437.1px;font-size:11.8px;color:#343434;transform:translate(-50%,-50%) scaleX(0.890);-webkit-text-stroke:0.35px #343434;">75.0</span>
<span class="t" style="left:957.3px;top:437.1px;font-size:11.8px;color:#343434;transform:translate(-50%,-50%) scaleX(0.890);-webkit-text-stroke:0.35px #343434;">75.8</span>
<span class="t" style="left:1078.0px;top:437.1px;font-size:11.8px;color:#343434;transform:translate(-50%,-50%) scaleX(0.890);-webkit-text-stroke:0.35px #343434;">117.9</span>
<span class="t" style="left:1198.7px;top:437.1px;font-size:11.8px;color:#343434;transform:translate(-50%,-50%) scaleX(0.890);-webkit-text-stroke:0.35px #343434;">158.2</span>
<span class="t" style="left:1319.3px;top:437.1px;font-size:11.8px;color:#343434;transform:translate(-50%,-50%) scaleX(0.890);-webkit-text-stroke:0.35px #343434;">81.0</span>
<span class="t" style="left:1440.1px;top:437.1px;font-size:11.8px;color:#343434;transform:translate(-50%,-50%) scaleX(0.890);-webkit-text-stroke:0.35px #343434;">108.7</span>
<span class="t" style="left:1560.7px;top:437.1px;font-size:11.8px;color:#343434;transform:translate(-50%,-50%) scaleX(0.890);-webkit-text-stroke:0.35px #343434;">121.9</span>
<span class="t" style="left:81.0px;top:458.4px;font-size:11.8px;color:#343434;transform:translate(-50%,-50%) scaleX(0.890);-webkit-text-stroke:0.35px #343434;">8</span>
<span class="t" style="left:216.5px;top:457.6px;font-size:11px;color:#343434;transform:translate(-50%,-50%) scaleX(1.073);-webkit-text-stroke:0.35px #343434;">Carbon Footprint</span>
<span class="t" style="left:411.8px;top:457.6px;font-size:11px;color:#343434;transform:translate(-50%,-50%) scaleX(1.047);-webkit-text-stroke:0.35px #343434;">Total CO<sub>2</sub> Emissions</span>
<span class="t" style="left:591.5px;top:457.6px;font-size:11px;color:#343434;transform:translate(-50%,-50%) scaleX(0.959);-webkit-text-stroke:0.35px #343434;">kg CO<sub>2</sub></span>
<span class="t" style="left:715.9px;top:458.4px;font-size:11.8px;color:#343434;transform:translate(-50%,-50%) scaleX(0.890);-webkit-text-stroke:0.35px #343434;">106.3</span>
<span class="t" style="left:836.6px;top:458.4px;font-size:11.8px;color:#343434;transform:translate(-50%,-50%) scaleX(0.890);-webkit-text-stroke:0.35px #343434;">131.7</span>
<span class="t" style="left:957.3px;top:458.4px;font-size:11.8px;color:#343434;transform:translate(-50%,-50%) scaleX(0.890);-webkit-text-stroke:0.35px #343434;">79.1</span>
<span class="t" style="left:1078.0px;top:458.4px;font-size:11.8px;color:#343434;transform:translate(-50%,-50%) scaleX(0.890);-webkit-text-stroke:0.35px #343434;">89.5</span>
<span class="t" style="left:1198.7px;top:458.4px;font-size:11.8px;color:#343434;transform:translate(-50%,-50%) scaleX(0.890);-webkit-text-stroke:0.35px #343434;">84.8</span>
<span class="t" style="left:1319.3px;top:458.4px;font-size:11.8px;color:#343434;transform:translate(-50%,-50%) scaleX(0.890);-webkit-text-stroke:0.35px #343434;">49.1</span>
<span class="t" style="left:1440.1px;top:458.4px;font-size:11.8px;color:#343434;transform:translate(-50%,-50%) scaleX(0.890);-webkit-text-stroke:0.35px #343434;">105.0</span>
<span class="t" style="left:1560.7px;top:458.4px;font-size:11.8px;color:#343434;transform:translate(-50%,-50%) scaleX(0.890);-webkit-text-stroke:0.35px #343434;">58.1</span>
<span class="t" style="left:81.0px;top:479.6px;font-size:11.8px;color:#343434;transform:translate(-50%,-50%) scaleX(0.890);-webkit-text-stroke:0.35px #343434;">9</span>
<span class="t" style="left:216.5px;top:478.9px;font-size:11px;color:#343434;transform:translate(-50%,-50%) scaleX(1.013);-webkit-text-stroke:0.35px #343434;">Renewable Usage</span>
<span class="t" style="left:411.8px;top:478.9px;font-size:11px;color:#343434;transform:translate(-50%,-50%) scaleX(0.995);-webkit-text-stroke:0.35px #343434;">% Renewable Energy Usage</span>
<span class="t" style="left:591.5px;top:478.9px;font-size:11px;color:#343434;transform:translate(-50%,-50%) scaleX(0.920);-webkit-text-stroke:0.35px #343434;">%</span>
<span class="t" style="left:715.9px;top:479.6px;font-size:11.8px;color:#343434;transform:translate(-50%,-50%) scaleX(0.890);-webkit-text-stroke:0.35px #343434;">87.0</span>
<span class="t" style="left:836.6px;top:479.6px;font-size:11.8px;color:#343434;transform:translate(-50%,-50%) scaleX(0.890);-webkit-text-stroke:0.35px #343434;">79.4</span>
<span class="t" style="left:957.3px;top:479.6px;font-size:11.8px;color:#343434;transform:translate(-50%,-50%) scaleX(0.890);-webkit-text-stroke:0.35px #343434;">64.8</span>
<span class="t" style="left:1078.0px;top:479.6px;font-size:11.8px;color:#343434;transform:translate(-50%,-50%) scaleX(0.890);-webkit-text-stroke:0.35px #343434;">65.3</span>
<span class="t" style="left:1198.7px;top:479.6px;font-size:11.8px;color:#343434;transform:translate(-50%,-50%) scaleX(0.890);-webkit-text-stroke:0.35px #343434;">90.6</span>
<span class="t" style="left:1319.3px;top:479.6px;font-size:11.8px;color:#343434;transform:translate(-50%,-50%) scaleX(0.890);-webkit-text-stroke:0.35px #343434;">103.0</span>
<span class="t" style="left:1440.1px;top:479.6px;font-size:11.8px;color:#343434;transform:translate(-50%,-50%) scaleX(0.890);-webkit-text-stroke:0.35px #343434;">95.5</span>
<span class="t" style="left:1560.7px;top:479.6px;font-size:11.8px;color:#343434;transform:translate(-50%,-50%) scaleX(0.890);-webkit-text-stroke:0.35px #343434;">101.6</span>
<span class="t" style="left:81.0px;top:500.9px;font-size:11.8px;color:#343434;transform:translate(-50%,-50%) scaleX(0.890);-webkit-text-stroke:0.35px #343434;">10</span>
<span class="t" style="left:216.5px;top:500.2px;font-size:11px;color:#343434;transform:translate(-50%,-50%) scaleX(1.056);-webkit-text-stroke:0.35px #343434;">Equipment Efficiency</span>
<span class="t" style="left:411.8px;top:500.2px;font-size:11px;color:#343434;transform:translate(-50%,-50%) scaleX(1.028);-webkit-text-stroke:0.35px #343434;">Equipment Energy Efficiency</span>
<span class="t" style="left:591.5px;top:500.2px;font-size:11px;color:#343434;transform:translate(-50%,-50%) scaleX(0.920);-webkit-text-stroke:0.35px #343434;">%</span>
<span class="t" style="left:715.9px;top:500.9px;font-size:11.8px;color:#343434;transform:translate(-50%,-50%) scaleX(0.890);-webkit-text-stroke:0.35px #343434;">89.1</span>
<span class="t" style="left:836.6px;top:500.9px;font-size:11.8px;color:#343434;transform:translate(-50%,-50%) scaleX(0.890);-webkit-text-stroke:0.35px #343434;">108.7</span>
<span class="t" style="left:957.3px;top:500.9px;font-size:11.8px;color:#343434;transform:translate(-50%,-50%) scaleX(0.890);-webkit-text-stroke:0.35px #343434;">117.7</span>
<span class="t" style="left:1078.0px;top:500.9px;font-size:11.8px;color:#343434;transform:translate(-50%,-50%) scaleX(0.890);-webkit-text-stroke:0.35px #343434;">125.4</span>
<span class="t" style="left:1198.7px;top:500.9px;font-size:11.8px;color:#343434;transform:translate(-50%,-50%) scaleX(0.890);-webkit-text-stroke:0.35px #343434;">93.2</span>
<span class="t" style="left:1319.3px;top:500.9px;font-size:11.8px;color:#343434;transform:translate(-50%,-50%) scaleX(0.890);-webkit-text-stroke:0.35px #343434;">73.0</span>
<span class="t" style="left:1440.1px;top:500.9px;font-size:11.8px;color:#343434;transform:translate(-50%,-50%) scaleX(0.890);-webkit-text-stroke:0.35px #343434;">122.7</span>
<span class="t" style="left:1560.7px;top:500.9px;font-size:11.8px;color:#343434;transform:translate(-50%,-50%) scaleX(0.890);-webkit-text-stroke:0.35px #343434;">96.3</span>
<span class="t" style="left:81.0px;top:522.2px;font-size:11.8px;color:#343434;transform:translate(-50%,-50%) scaleX(0.890);-webkit-text-stroke:0.35px #343434;">11</span>
<span class="t" style="left:216.5px;top:521.4px;font-size:11px;color:#343434;transform:translate(-50%,-50%) scaleX(1.053);-webkit-text-stroke:0.35px #343434;">Lighting Efficiency</span>
<span class="t" style="left:411.8px;top:521.4px;font-size:11px;color:#343434;transform:translate(-50%,-50%) scaleX(1.047);-webkit-text-stroke:0.35px #343434;">Lighting Efficiency (Lumens per Watt)</span>
<span class="t" style="left:591.5px;top:521.4px;font-size:11px;color:#343434;transform:translate(-50%,-50%) scaleX(1.047);-webkit-text-stroke:0.35px #343434;">lm/W</span>
<span class="t" style="left:715.9px;top:522.2px;font-size:11.8px;color:#343434;transform:translate(-50%,-50%) scaleX(0.890);-webkit-text-stroke:0.35px #343434;">75.7</span>
<span class="t" style="left:836.6px;top:522.2px;font-size:11.8px;color:#343434;transform:translate(-50%,-50%) scaleX(0.890);-webkit-text-stroke:0.35px #343434;">95.0</span>
<span class="t" style="left:957.3px;top:522.2px;font-size:11.8px;color:#343434;transform:translate(-50%,-50%) scaleX(0.890);-webkit-text-stroke:0.35px #343434;">77.4</span>
<span class="t" style="left:1078.0px;top:522.2px;font-size:11.8px;color:#343434;transform:translate(-50%,-50%) scaleX(0.890);-webkit-text-stroke:0.35px #343434;">80.0</span>
<span class="t" style="left:1198.7px;top:522.2px;font-size:11.8px;color:#343434;transform:translate(-50%,-50%) scaleX(0.890);-webkit-text-stroke:0.35px #343434;">118.1</span>
<span class="t" style="left:1319.3px;top:522.2px;font-size:11.8px;color:#343434;transform:translate(-50%,-50%) scaleX(0.890);-webkit-text-stroke:0.35px #343434;">51.7</span>
<span class="t" style="left:1440.1px;top:522.2px;font-size:11.8px;color:#343434;transform:translate(-50%,-50%) scaleX(0.890);-webkit-text-stroke:0.35px #343434;">95.0</span>
<span class="t" style="left:1560.7px;top:522.2px;font-size:11.8px;color:#343434;transform:translate(-50%,-50%) scaleX(0.890);-webkit-text-stroke:0.35px #343434;">86.8</span>
<span class="t" style="left:81.0px;top:543.5px;font-size:11.8px;color:#343434;transform:translate(-50%,-50%) scaleX(0.890);-webkit-text-stroke:0.35px #343434;">12</span>
<span class="t" style="left:216.5px;top:542.7px;font-size:11px;color:#343434;transform:translate(-50%,-50%) scaleX(1.074);-webkit-text-stroke:0.35px #343434;">Operational Efficiency</span>
<span class="t" style="left:411.8px;top:542.7px;font-size:11px;color:#343434;transform:translate(-50%,-50%) scaleX(0.999);-webkit-text-stroke:0.35px #343434;">% Energy Savings Achieved</span>
<span class="t" style="left:591.5px;top:542.7px;font-size:11px;color:#343434;transform:translate(-50%,-50%) scaleX(0.920);-webkit-text-stroke:0.35px #343434;">%</span>
<span class="t" style="left:715.9px;top:543.5px;font-size:11.8px;color:#343434;transform:translate(-50%,-50%) scaleX(0.890);-webkit-text-stroke:0.35px #343434;">109.5</span>
<span class="t" style="left:836.6px;top:543.5px;font-size:11.8px;color:#343434;transform:translate(-50%,-50%) scaleX(0.890);-webkit-text-stroke:0.35px #343434;">123.0</span>
<span class="t" style="left:957.3px;top:543.5px;font-size:11.8px;color:#343434;transform:translate(-50%,-50%) scaleX(0.890);-webkit-text-stroke:0.35px #343434;">72.1</span>
<span class="t" style="left:1078.0px;top:543.5px;font-size:11.8px;color:#343434;transform:translate(-50%,-50%) scaleX(0.890);-webkit-text-stroke:0.35px #343434;">78.6</span>
<span class="t" style="left:1198.7px;top:543.5px;font-size:11.8px;color:#343434;transform:translate(-50%,-50%) scaleX(0.890);-webkit-text-stroke:0.35px #343434;">158.4</span>
<span class="t" style="left:1319.3px;top:543.5px;font-size:11.8px;color:#343434;transform:translate(-50%,-50%) scaleX(0.890);-webkit-text-stroke:0.35px #343434;">95.6</span>
<span class="t" style="left:1440.1px;top:543.5px;font-size:11.8px;color:#343434;transform:translate(-50%,-50%) scaleX(0.890);-webkit-text-stroke:0.35px #343434;">76.9</span>
<span class="t" style="left:1560.7px;top:543.5px;font-size:11.8px;color:#343434;transform:translate(-50%,-50%) scaleX(0.890);-webkit-text-stroke:0.35px #343434;">114.5</span>
<span class="t" style="left:81.0px;top:564.7px;font-size:11.8px;color:#343434;transform:translate(-50%,-50%) scaleX(0.890);-webkit-text-stroke:0.35px #343434;">13</span>
<span class="t" style="left:216.5px;top:564.0px;font-size:11px;color:#343434;transform:translate(-50%,-50%) scaleX(1.074);-webkit-text-stroke:0.35px #343434;">Operational Efficiency</span>
<span class="t" style="left:411.8px;top:564.0px;font-size:11px;color:#343434;transform:translate(-50%,-50%) scaleX(1.037);-webkit-text-stroke:0.35px #343434;">Peak Demand Reduction</span>
<span class="t" style="left:591.5px;top:564.0px;font-size:11px;color:#343434;transform:translate(-50%,-50%) scaleX(0.983);-webkit-text-stroke:0.35px #343434;">kW</span>
<span class="t" style="left:715.9px;top:564.7px;font-size:11.8px;color:#343434;transform:translate(-50%,-50%) scaleX(0.890);-webkit-text-stroke:0.35px #343434;">111.7</span>
<span class="t" style="left:836.6px;top:564.7px;font-size:11.8px;color:#343434;transform:translate(-50%,-50%) scaleX(0.890);-webkit-text-stroke:0.35px #343434;">112.2</span>
<span class="t" style="left:957.3px;top:564.7px;font-size:11.8px;color:#343434;transform:translate(-50%,-50%) scaleX(0.890);-webkit-text-stroke:0.35px #343434;">140.7</span>
<span class="t" style="left:1078.0px;top:564.7px;font-size:11.8px;color:#343434;transform:translate(-50%,-50%) scaleX(0.890);-webkit-text-stroke:0.35px #343434;">92.4</span>
<span class="t" style="left:1198.7px;top:564.7px;font-size:11.8px;color:#343434;transform:translate(-50%,-50%) scaleX(0.890);-webkit-text-stroke:0.35px #343434;">123.8</span>
<span class="t" style="left:1319.3px;top:564.7px;font-size:11.8px;color:#343434;transform:translate(-50%,-50%) scaleX(0.890);-webkit-text-stroke:0.35px #343434;">70.7</span>
<span class="t" style="left:1440.1px;top:564.7px;font-size:11.8px;color:#343434;transform:translate(-50%,-50%) scaleX(0.890);-webkit-text-stroke:0.35px #343434;">65.1</span>
<span class="t" style="left:1560.7px;top:564.7px;font-size:11.8px;color:#343434;transform:translate(-50%,-50%) scaleX(0.890);-webkit-text-stroke:0.35px #343434;">104.1</span>
<div class="b" style="left:5.0px;top:80.0px;width:1610.0px;height:103.7px;background:#ffffff;border-radius:8px;"></div>
<div class="b" style="left:200.0px;top:87.0px;width:1.0px;height:90.0px;background:#e0e0e0;"></div>
<div class="b" style="left:291.8px;top:87.0px;width:1.0px;height:90.0px;background:#e0e0e0;"></div>
<div class="b" style="left:393.7px;top:87.0px;width:1.0px;height:90.0px;background:#e0e0e0;"></div>
<div class="b" style="left:464.8px;top:87.0px;width:1.0px;height:90.0px;background:#e0e0e0;"></div>
<div class="b" style="left:534.1px;top:87.0px;width:1.0px;height:90.0px;background:#e0e0e0;"></div>
<div class="b" style="left:845.0px;top:87.0px;width:1.0px;height:90.0px;background:#e0e0e0;"></div>
<div class="b" style="left:906.5px;top:87.0px;width:1.0px;height:90.0px;background:#e0e0e0;"></div>
<div class="b" style="left:1158.5px;top:87.0px;width:1.0px;height:90.0px;background:#e0e0e0;"></div>
<div class="b" style="left:1219.5px;top:87.0px;width:1.0px;height:90.0px;background:#e0e0e0;"></div>
<span class="t" style="left:41.0px;top:95.0px;font-size:15px;color:#666;transform:translate(-50%,-50%) scaleX(1.013);">abc</span>
<svg class="b" style="left:30.0px;top:104.0px;" width="22" height="14" viewBox="0 0 22 14"><path d="M1.500 7.200 L7.800 13 L20.500 1.200" fill="none" stroke="#4fa677" stroke-width="1.400"/></svg>
<span class="t" style="left:42.0px;top:131.3px;font-size:13px;color:#424242;transform:translate(-50%,-50%) scaleX(0.972);">Spelling</span>
<svg class="b" style="left:82.0px;top:88.0px;" width="34" height="29" viewBox="0 0 34 29"><g fill="none" stroke="#5a5a5a" stroke-width="1.300" stroke-linejoin="round"><path d="M16.700 3.500 v23.500 M2 1.800 h10.500 c2.500 0 4.200 0.800 4.200 2.200 c0 -1.400 1.700 -2.200 4.200 -2.200 h10.500 a0.800 0.800 0 0 1 0.800 0.800 v22.400 a0.800 0.800 0 0 1 -0.800 0.800 h-10.500 c-2.500 0 -4.200 0.500 -4.200 1.400 c0 -0.900 -1.700 -1.400 -4.200 -1.400 h-10.500 a0.800 0.800 0 0 1 -0.800 -0.800 v-22.400 a0.800 0.800 0 0 1 0.800 -0.800 z"/></g><path d="M5.500 8.600 h6.800" stroke="#c4506c" stroke-width="1.500"/><path d="M5.500 13.300 h6.800" stroke="#a06070" stroke-width="1.500"/><g stroke="#777" stroke-width="1.500"><path d="M5.500 17.800 h6.800 M20.700 8.600 h7.300 M20.700 13.300 h7.300 M20.700 17.800 h7.300"/></g></svg>
<span class="t" style="left:99.0px;top:131.3px;font-size:13px;color:#424242;transform:translate(-50%,-50%) scaleX(0.871);">Thesaurus</span>
<svg class="b" style="left:145.5px;top:88.0px;" width="32" height="31" viewBox="0 0 32 31"><g fill="none" stroke="#5a5a5a" stroke-width="1.300"><path d="M1 1 h29 v15.500 M1 1 v28.500 h10.500"/><path d="M1 4.300 h29" stroke-width="1.500"/><path d="M1 13.700 h29 M1 21 h11 M11.300 4.300 v25 M20.800 4.300 v11"/></g></svg>
<span class="t" style="left:166.8px;top:113.0px;font-size:13px;color:#5aa9d2;transform:translate(-50%,-50%) scaleX(0.875);">123</span>
<span class="t" style="left:161.0px;top:131.3px;font-size:13px;color:#424242;transform:translate(-50%,-50%) scaleX(0.995);">Workbook</span>
<span class="t" style="left:161.0px;top:148.3px;font-size:13px;color:#424242;transform:translate(-50%,-50%) scaleX(0.961);">Statistics</span>
<span class="t" style="left:104.0px;top:173.8px;font-size:11px;color:#4a4a4a;transform:translate(-50%,-50%) scaleX(1.049);">Proofing</span>
<span class="t" style="left:246.6px;top:131.3px;font-size:13px;color:#424242;transform:translate(-50%,-50%) scaleX(0.909);">Check</span>
<span class="t" style="left:246.0px;top:148.3px;font-size:13px;color:#424242;transform:translate(-50%,-50%) scaleX(0.940);">Performance</span>
<span class="t" style="left:246.0px;top:173.8px;font-size:11px;color:#4a4a4a;transform:translate(-50%,-50%) scaleX(0.984);">Performance</span>
<span class="t" style="left:343.4px;top:133.3px;font-size:13px;color:#424242;transform:translate(-50%,-50%) scaleX(0.909);">Check</span>
<span class="t" style="left:338.0px;top:150.3px;font-size:13px;color:#424242;transform:translate(-50%,-50%) scaleX(0.960);">Accessibility</span>
<svg class="b" style="left:375.0px;top:147.0px;" width="8" height="6" viewBox="0 0 8 6"><path d="M1 1 L4 4 L7 1" fill="none" stroke="#5a5a5a" stroke-width="1.300"/></svg>
<span class="t" style="left:343.0px;top:173.8px;font-size:11px;color:#4a4a4a;transform:translate(-50%,-50%) scaleX(0.985);">Accessibility</span>
<span class="t" style="left:430.0px;top:131.3px;font-size:13px;color:#424242;transform:translate(-50%,-50%) scaleX(0.931);">Translate</span>
<span class="t" style="left:430.0px;top:173.8px;font-size:11px;color:#4a4a4a;transform:translate(-50%,-50%) scaleX(0.980);">Language</span>
<span class="t" style="left:500.0px;top:131.3px;font-size:13px;color:#424242;transform:translate(-50%,-50%) scaleX(0.953);">Show</span>
<span class="t" style="left:500.0px;top:148.3px;font-size:13px;color:#424242;transform:translate(-50%,-50%) scaleX(0.922);">Changes</span>
<span class="t" style="left:500.0px;top:173.8px;font-size:11px;color:#4a4a4a;transform:translate(-50%,-50%) scaleX(0.953);">Changes</span>
<span class="t" style="left:573.0px;top:131.3px;font-size:13px;color:#424242;transform:translate(-50%,-50%) scaleX(0.923);">New</span>
<span class="t" style="left:572.0px;top:148.3px;font-size:13px;color:#424242;transform:translate(-50%,-50%) scaleX(0.994);">Comment</span>
<span class="t" style="left:626.0px;top:131.3px;font-size:13px;color:#c3c3c3;transform:translate(-50%,-50%) scaleX(0.984);">Delete</span>
<span class="t" style="left:680.0px;top:131.3px;font-size:13px;color:#c3c3c3;transform:translate(-50%,-50%) scaleX(0.929);">Previous</span>
<span class="t" style="left:680.0px;top:148.3px;font-size:13px;color:#c3c3c3;transform:translate(-50%,-50%) scaleX(0.976);">Comment</span>
<span class="t" style="left:741.0px;top:131.3px;font-size:13px;color:#c3c3c3;transform:translate(-50%,-50%) scaleX(1.010);">Next</span>
<span class="t" style="left:741.0px;top:148.3px;font-size:13px;color:#c3c3c3;transform:translate(-50%,-50%) scaleX(0.976);">Comment</span>
<span class="t" style="left:805.0px;top:131.3px;font-size:13px;color:#424242;transform:translate(-50%,-50%) scaleX(0.953);">Show</span>
<span class="t" style="left:805.0px;top:148.3px;font-size:13px;color:#424242;transform:translate(-50%,-50%) scaleX(0.970);">Comments</span>
<span class="t" style="left:690.0px;top:173.8px;font-size:11px;color:#4a4a4a;transform:translate(-50%,-50%) scaleX(0.978);">Comments</span>
<span class="t" style="left:876.0px;top:131.3px;font-size:13px;color:#424242;transform:translate(-50%,-50%) scaleX(0.971);">Notes</span>
<svg class="b" style="left:872.0px;top:144.0px;" width="8" height="6" viewBox="0 0 8 6"><path d="M1 1 L4 4 L7 1" fill="none" stroke="#5a5a5a" stroke-width="1.300"/></svg>
<span class="t" style="left:876.0px;top:173.8px;font-size:11px;color:#4a4a4a;transform:translate(-50%,-50%) scaleX(1.009);">Notes</span>
<span class="t" style="left:937.0px;top:131.3px;font-size:13px;color:#424242;transform:translate(-50%,-50%) scaleX(0.971);">Protect</span>
<span class="t" style="left:937.0px;top:148.3px;font-size:13px;color:#424242;transform:translate(-50%,-50%) scaleX(0.912);">Sheet</span>
<span class="t" style="left:992.0px;top:131.3px;font-size:13px;color:#424242;transform:translate(-50%,-50%) scaleX(0.971);">Protect</span>
<span class="t" style="left:992.0px;top:148.3px;font-size:13px;color:#424242;transform:translate(-50%,-50%) scaleX(0.995);">Workbook</span>
<span class="t" style="left:1056.0px;top:131.3px;font-size:13px;color:#424242;transform:translate(-50%,-50%) scaleX(1.016);">Allow Edit</span>
<span class="t" style="left:1056.0px;top:148.3px;font-size:13px;color:#424242;transform:translate(-50%,-50%) scaleX(0.915);">Ranges</span>
<span class="t" style="left:1120.0px;top:131.3px;font-size:13px;color:#c3c3c3;transform:translate(-50%,-50%) scaleX(0.915);">Unshare</span>
<span class="t" style="left:1120.0px;top:148.3px;font-size:13px;color:#c3c3c3;transform:translate(-50%,-50%) scaleX(0.995);">Workbook</span>
<span class="t" style="left:1032.0px;top:173.8px;font-size:11px;color:#4a4a4a;transform:translate(-50%,-50%) scaleX(1.004);">Protect</span>
<span class="t" style="left:1190.0px;top:133.3px;font-size:13px;color:#424242;transform:translate(-50%,-50%) scaleX(1.028);">Hide</span>
<span class="t" style="left:1184.0px;top:150.3px;font-size:13px;color:#424242;transform:translate(-50%,-50%) scaleX(0.923);">Ink</span>
<svg class="b" style="left:1195.0px;top:147.0px;" width="8" height="6" viewBox="0 0 8 6"><path d="M1 1 L4 4 L7 1" fill="none" stroke="#5a5a5a" stroke-width="1.300"/></svg>
<span class="t" style="left:1189.0px;top:173.8px;font-size:11px;color:#4a4a4a;transform:translate(-50%,-50%) scaleX(0.953);">Ink</span>
<svg class="b" style="left:1596.0px;top:165.0px;" width="8" height="6" viewBox="0 0 8 6"><path d="M1 1.500 L4 4.500 L7 1.500" fill="none" stroke="#666" stroke-width="1.100"/></svg>
<svg class="b" style="left:0;top:0" width="1600" height="584" viewBox="0 0 1600 584"><path d="M232.1 115.49999999999999 V89.6 H261.8 V105.39999999999999 M232.1 96.6 H261.8 M232.1 103.89999999999999 H261.8 M232.1 110.69999999999999 H248.5 M242.0 89.6 V110.69999999999999 M251.9 89.6 V105.39999999999999 M232.1 115.49999999999999 H240.5 C243.0 115.49999999999999 244.0 112.19999999999999 246.0 110.69999999999999 " fill="none" stroke="#5a5a5a" stroke-width="1.25"/><circle cx="256.200" cy="111.800" r="6.700" fill="#fff" stroke="#4f9ad0" stroke-width="1.300"/><path d="M256.200 108 v4.600 h3" fill="none" stroke="#4f9ad0" stroke-width="1.300"/><path d="M254.400 103.800 h3.600" stroke="#4f9ad0" stroke-width="1.500"/><path d="M261.300 106 l1.200 -1.200" stroke="#4f9ad0" stroke-width="1.200"/><path d="M353.800 101 V97.700 L345 89 H332.600 V117.700 H346.200" fill="none" stroke="#5a5a5a" stroke-width="1.300"/><path d="M345 89 V97.700 H353.800" fill="none" stroke="#5a5a5a" stroke-width="1.300"/><circle cx="353.300" cy="105.300" r="1.700" fill="#cfe6f7" stroke="#4f9ad0" stroke-width="1"/><path d="M346.800 107.500 L353.300 108.700 L359.800 107.500 L360.200 109.400 L355.700 110.800 L355.900 113.500 L357.900 119 L356.100 119.800 L353.300 114.800 L350.500 119.800 L348.700 119 L350.700 113.500 L350.900 110.800 L346.400 109.400 Z" fill="#bcdcf3" stroke="#4f9ad0" stroke-width="1" stroke-linejoin="round"/><text x="420.800" y="116.800" font-size="23" text-anchor="middle" fill="#3f90cf" font-family="Liberation Sans" textLength="11.200" lengthAdjust="spacingAndGlyphs">a</text><path d="M426 101.800 V97.300 H419" fill="none" stroke="#3f90cf" stroke-width="2.800"/><path d="M415.400 97.300 L421.200 92.600 V102 Z" fill="#3f90cf"/><path d="M433.600 108 V112.300 H440.500" fill="none" stroke="#4aa25c" stroke-width="2.800"/><path d="M444.600 112.300 L438.800 107.600 V117 Z" fill="#4aa25c"/><g fill="none" stroke="#4aa25c" stroke-width="1.700" stroke-linecap="round"><path d="M431.500 93.300 C435 93.700 439 93.300 442.600 92.400"/><path d="M436.400 89.200 C435.800 94 436 99 437.200 103.200"/><path d="M440.300 95.800 C439.500 99.500 435.500 103.600 432.800 102.700 C430.600 101.900 431.500 98.200 436 97 C440.500 95.900 444 97.800 443.600 100.400 C443.300 102.400 441.500 103.500 439.600 103.900"/></g><path d="M485.5 115.49999999999999 V89.6 H515.2 V105.39999999999999 M485.5 96.6 H515.2 M485.5 103.89999999999999 H515.2 M485.5 110.69999999999999 H501.9 M495.4 89.6 V110.69999999999999 M505.3 89.6 V105.39999999999999 M485.5 115.49999999999999 H493.9 C496.4 115.49999999999999 497.4 112.19999999999999 499.4 110.69999999999999 " fill="none" stroke="#5a5a5a" stroke-width="1.25"/><circle cx="508.900" cy="111.500" r="7" fill="#fff"/><path d="M502.100 109.700 A7 7 0 1 1 502.800 115" fill="none" stroke="#4f9ad0" stroke-width="1.300"/><path d="M500.300 106.400 L501.700 110.500 L505.600 109.300" fill="none" stroke="#4f9ad0" stroke-width="1.300"/><path d="M508.900 107.600 V112.300 L511.500 114.200" fill="none" stroke="#4f9ad0" stroke-width="1.300"/><path d="M558.4 97 V109 H561.1999999999999 L561.8 115.700 L568.1999999999999 109 H587.9 V89.900 H566.5" fill="#f7f7f7" stroke="none"/><path d="M558.4 97 V109 H561.1999999999999 L561.8 115.700 L568.1999999999999 109 H587.9 V89.900 H566.5" fill="none" stroke="#5a5a5a" stroke-width="1.3"/><path d="M564.100 86.500 V102.200 M556.200 93.800 H571.900" stroke="#4aa274" stroke-width="1.600" fill="none"/><path d="M611.3 99 V109 H614.0999999999999 L614.6999999999999 115.700 L621.0999999999999 109 H640.8 V89.900 H624" fill="#f3f3f3" stroke="none"/><path d="M611.3 99 V109 H614.0999999999999 L614.6999999999999 115.700 L621.0999999999999 109 H640.8 V89.900 H624" fill="none" stroke="#c8c8c8" stroke-width="1.3"/><path d="M610.200 86.500 L623.100 99.400 M623.100 86.500 L610.200 99.400" stroke="#c8c8c8" stroke-width="1.300" fill="none"/><path d="M664.8 99 V109 H667.5999999999999 L668.1999999999999 115.700 L674.5999999999999 109 H694.3 V89.900 H677" fill="#f3f3f3" stroke="none"/><path d="M664.8 99 V109 H667.5999999999999 L668.1999999999999 115.700 L674.5999999999999 109 H694.3 V89.900 H677" fill="none" stroke="#c8c8c8" stroke-width="1.3"/><path d="M680.500 93.300 H664.600 M670.600 87 L664.300 93.300 L670.600 99.600" stroke="#c8c8c8" stroke-width="1.300" fill="none"/><path d="M726.6 99 V109 H729.4 L730.0 115.700 L736.4 109 H756.1 V89.900 H741" fill="#f3f3f3" stroke="none"/><path d="M726.6 99 V109 H729.4 L730.0 115.700 L736.4 109 H756.1 V89.900 H741" fill="none" stroke="#c8c8c8" stroke-width="1.3"/><path d="M725 93.300 H740.800 M734.600 87 L741 93.300 L734.600 99.600" stroke="#c8c8c8" stroke-width="1.300" fill="none"/><path d="M790.6 89.9 V109 H793.4 L794.0 115.700 L800.4 109 H820.1 V89.900 H790.6" fill="#f8f8f8" stroke="none"/><path d="M790.6 89.9 V109 H793.4 L794.0 115.700 L800.4 109 H820.1 V89.900 H790.6" fill="none" stroke="#5a5a5a" stroke-width="1.3"/><path d="M863.700 90.100 H889.100 a0.800 0.800 0 0 1 0.800 0.800 V106 L879.400 116.300 H863.700 a0.800 0.800 0 0 1 -0.800 -0.800 V90.900 a0.800 0.800 0 0 1 0.800 -0.800 Z" fill="#f8f8f8" stroke="#5a5a5a" stroke-width="1.300"/><path d="M879.400 116.300 V106.200 H889.900" fill="none" stroke="#5a5a5a" stroke-width="1.300"/><path d="M922.9 115.49999999999999 V89.6 H952.5 V105.39999999999999 M922.9 96.6 H952.5 M922.9 103.89999999999999 H952.5 M922.9 110.69999999999999 H939.2666666666667 M932.7666666666667 89.6 V110.69999999999999 M942.6333333333333 89.6 V105.39999999999999 M922.9 115.49999999999999 H931.2666666666667 C933.7666666666667 115.49999999999999 934.7666666666667 112.19999999999999 936.7666666666667 110.69999999999999 " fill="none" stroke="#5a5a5a" stroke-width="1.25"/><rect x="942.4" y="102.7" width="11" height="9" fill="#fff"/><path d="M944.6 110.7 V105.5 A3.400 3.400 0 0 1 951.4 105.5 V110.7" fill="none" stroke="#eba550" stroke-width="1.900"/><rect x="940.9" y="110.7" width="14.100" height="9" rx="1" fill="#fbd38c" stroke="#eba550" stroke-width="1"/><path d="M977.500 114.600 V88.500 H1004.300" fill="none" stroke="#5a5a5a" stroke-width="1.300"/><path d="M980.9 116.90000000000002 V91.9 H1007.0 V106.60000000000001 M980.9 98.30000000000001 H1007.0 M980.9 105.10000000000001 H1007.0 M980.9 111.50000000000001 H996.1 M989.6 91.9 V111.50000000000001 M998.3 91.9 V106.60000000000001 M980.9 116.90000000000002 H988.1 C990.6 116.90000000000002 991.6 113.00000000000001 993.6 111.50000000000001 " fill="none" stroke="#5a5a5a" stroke-width="1.25"/><rect x="996.8" y="102.7" width="11" height="9" fill="#fff"/><path d="M999.0 110.7 V105.5 A3.400 3.400 0 0 1 1005.8 105.5 V110.7" fill="none" stroke="#eba550" stroke-width="1.900"/><rect x="995.3" y="110.7" width="14.100" height="9" rx="1" fill="#fbd38c" stroke="#eba550" stroke-width="1"/><path d="M1052 114.600 H1041 V92.100 H1070.600 V99.500 M1041 98.900 H1070.600 M1041 105.600 H1064 M1050.600 92.100 V114.600 M1060.700 92.100 V108" fill="none" stroke="#5a5a5a" stroke-width="1.250"/><g transform="translate(1051.200,119.100) rotate(-41.900)"><path d="M0 0 L5.500 -2.400 H27 a1.200 1.200 0 0 1 1.200 1.200 V1.200 a1.200 1.200 0 0 1 -1.200 1.200 H5.500 Z" fill="#e3f1fb" stroke="#4f9ad0" stroke-width="1.200" stroke-linejoin="round"/><path d="M0 0 L4 -1.700 V1.700 Z" fill="#4f9ad0"/><path d="M23.500 -2.400 V2.400" stroke="#4f9ad0" stroke-width="1.100"/></g><path d="M1104.600 114.600 V88.500 H1131.600" fill="none" stroke="#c8c8c8" stroke-width="1.300"/><path d="M1108.2 116.90000000000002 V91.9 H1134.4 V106.60000000000001 M1108.2 98.30000000000001 H1134.4 M1108.2 105.10000000000001 H1134.4 M1108.2 111.50000000000001 H1123.4333333333334 M1116.9333333333334 91.9 V111.50000000000001 M1125.6666666666667 91.9 V106.60000000000001 M1108.2 116.90000000000002 H1115.4333333333334 C1117.9333333333334 116.90000000000002 1118.9333333333334 113.00000000000001 1120.9333333333334 111.50000000000001 " fill="none" stroke="#c8c8c8" stroke-width="1.25"/><rect x="1121" y="103" width="16" height="17" fill="#fff"/><circle cx="1129.100" cy="108.300" r="4.100" fill="#fafafa" stroke="#c8c8c8" stroke-width="1.300"/><path d="M1122 119.700 C1122 116 1125 114.300 1129.100 114.300 C1133.200 114.300 1136.300 116 1136.300 119.700" fill="#fafafa" stroke="#c8c8c8" stroke-width="1.300"/><path d="M1175.500 89 H1200.200 L1175.500 112.900 Z" fill="#f6f8fa" stroke="#5a5a5a" stroke-width="1.400" stroke-linejoin="miter"/><g fill="none" stroke="#d25570" stroke-width="1.400" stroke-linecap="round"><path d="M1190.700 98.900 C1193.200 100 1190.300 104 1193.500 104.200 C1197 104.300 1200 101.500 1204.200 100.600"/><path d="M1176 116.900 C1181 115.500 1186 111.500 1189.500 111.300 C1192.600 111.300 1190.400 115.800 1193.800 115.700 C1197 115.600 1200 113 1204.200 111.800"/></g></svg>
</div></body></html>
